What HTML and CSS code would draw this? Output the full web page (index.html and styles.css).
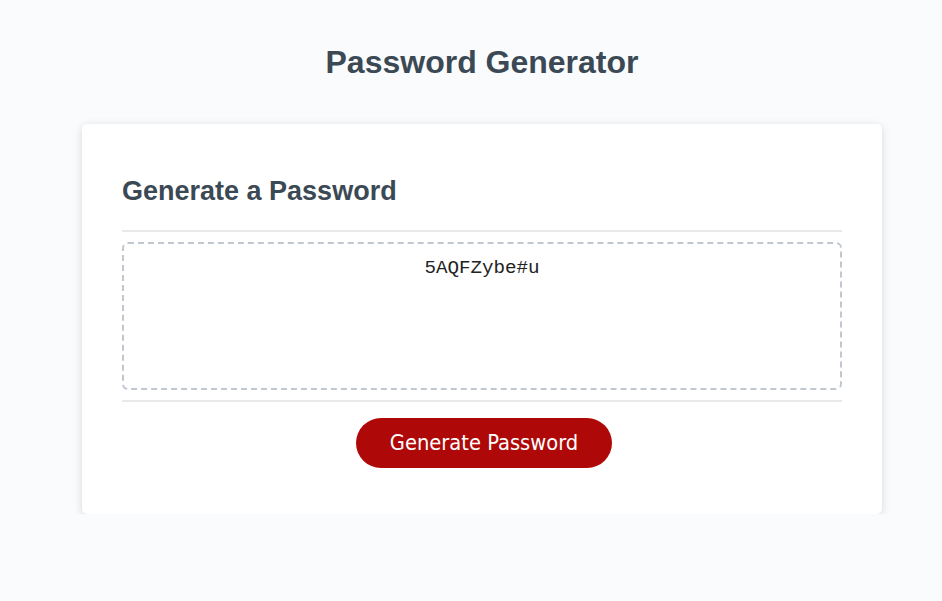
FILE: index.html
```html
<!DOCTYPE html>
<html lang="en">
<head>
<meta charset="UTF-8">
<title>Password Generator</title>
<link rel="stylesheet" href="styles.css">
</head>
<body>
<div class="wrapper">
  <header class="page-header">
    <h1>Password Generator</h1>
  </header>
  <div class="card">
    <div class="card-header">
      <h2>Generate a Password</h2>
    </div>
    <div class="card-body">
      <textarea readonly class="password" aria-label="Generated Password">5AQFZybe#u</textarea>
    </div>
    <div class="card-footer">
      <button class="btn">Generate Password</button>
    </div>
  </div>
</div>
</body>
</html>
```

FILE: styles.css
```css
* {
  box-sizing: border-box;
}

body {
  margin: 0;
  padding: 0;
  background-color: #f9fbfd;
  font-family: "Liberation Sans", Arial, sans-serif;
}

.wrapper {
  padding: 44px 0 0 22px;
}

.page-header {
  text-align: center;
  color: #3b4954;
}

.page-header h1 {
  margin: 0 0 43px;
  font-size: 32px;
  line-height: 37px;
  font-weight: bold;
}

.card {
  background-color: #ffffff;
  border-radius: 5px;
  box-shadow: rgba(0, 0, 0, 0.15) 0 2px 8px 0;
  color: #3b4954;
  font-size: 18px;
  margin: 0 auto;
  max-width: 800px;
  padding: 30px 40px;
}

.card-header h2 {
  margin: 22px 0 23px;
  font-size: 27px;
  line-height: 31px;
  font-weight: bold;
}

.card-header::after,
.card-footer::before {
  content: "";
  display: block;
  width: 100%;
  height: 2px;
  background: #e7e9eb;
}

.card-body {
  padding: 10px 0;
}

.password {
  display: block;
  width: 100%;
  height: 148px;
  margin: 0;
  border: 2px dashed #c0c7cf;
  border-radius: 6px;
  resize: none;
  overflow: hidden;
  text-align: center;
  padding: 13px 10px 10px;
  font-family: "Liberation Mono", "Courier New", monospace;
  font-size: 19.2px;
  line-height: 22px;
  color: #222222;
  background: #ffffff;
  outline: none;
}

.card-footer {
  text-align: center;
}

.btn {
  border: none;
  background-color: #af0808;
  border-radius: 25px;
  color: #ffffff;
  display: inline-block;
  font-family: "DejaVu Sans Condensed", "DejaVu Sans", sans-serif;
  font-size: 21.7px;
  line-height: 22px;
  margin: 16px 0 16px 4px;
  padding: 14px 34px;
  text-align: center;
  cursor: pointer;
}
```
